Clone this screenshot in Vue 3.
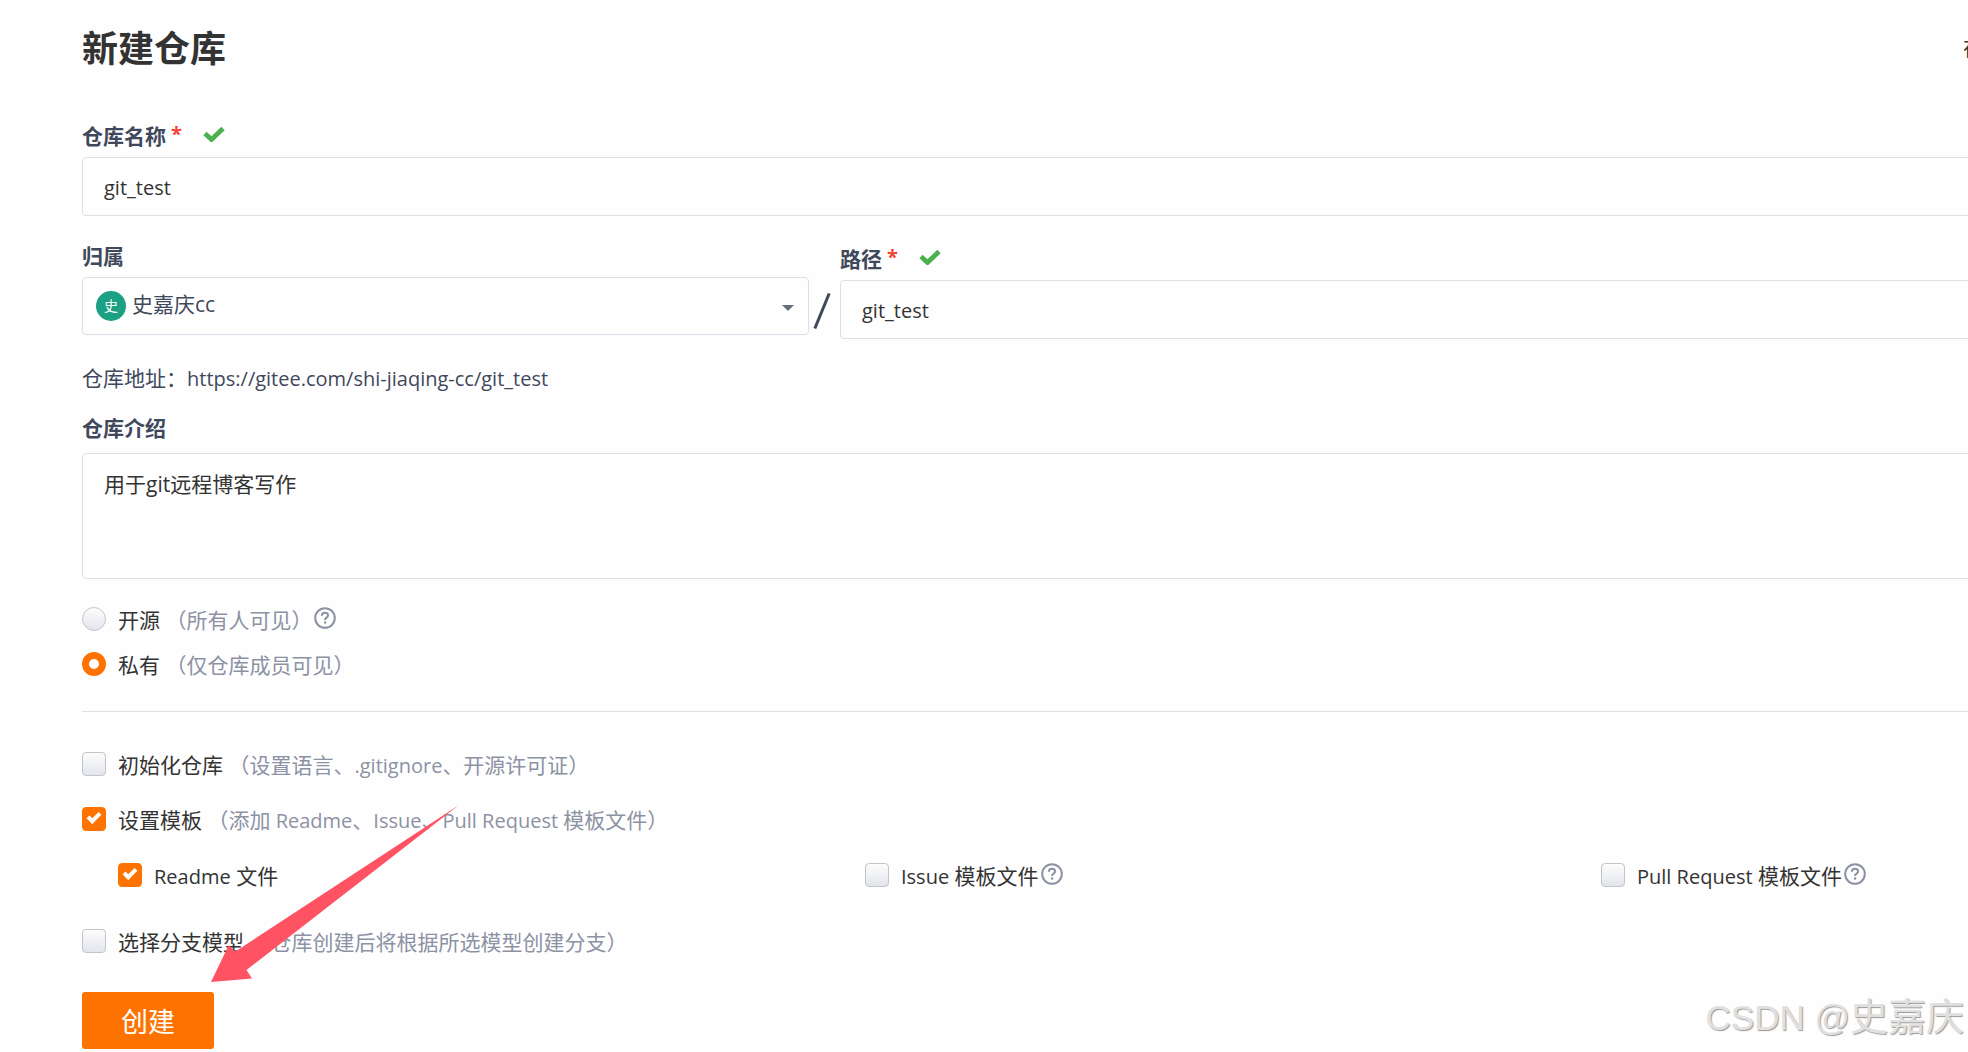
<template>
  <div class="page">
    <form class="repo-form" @submit.prevent>
      <header class="form-header">
        <h1 class="form-title">新建仓库</h1>
        <span class="import-tip">在</span>
      </header>

      <div class="field name-field">
        <div class="field-label">
          <label for="repo-name">仓库名称</label>
          <span class="required">*</span>
          <svg class="tick" viewBox="0 0 22 16" width="22" height="16">
            <path d="M2 7.5 8.5 13.5 20 2.5" fill="none" stroke="#4caf50" stroke-width="4.8" />
          </svg>
        </div>
        <input id="repo-name" v-model="form.name" class="text-input" type="text" />
      </div>

      <div class="path-row">
        <div class="field">
          <div class="field-label">
            <label for="repo-owner">归属</label>
          </div>
          <div class="select-box">
            <span class="avatar">史</span>
            <select id="repo-owner" v-model="form.owner" class="owner-select">
              <option value="shi-jiaqing-cc">史嘉庆cc</option>
            </select>
            <svg class="caret" viewBox="0 0 12 6" width="12" height="6">
              <path d="M0 0H12L6 6Z" fill="#666d7c" />
            </svg>
          </div>
        </div>
        <svg class="slash" viewBox="0 0 18 36" width="18" height="36">
          <path d="M1.8 35.5 16.2 0.5" fill="none" stroke="#40485b" stroke-width="3" />
        </svg>
        <div class="field path-field">
          <div class="field-label">
            <label for="repo-path">路径</label>
            <span class="required">*</span>
            <svg class="tick" viewBox="0 0 22 16" width="22" height="16">
              <path d="M2 7.5 8.5 13.5 20 2.5" fill="none" stroke="#4caf50" stroke-width="4.8" />
            </svg>
          </div>
          <input id="repo-path" v-model="form.path" class="text-input" type="text" />
        </div>
      </div>

      <p class="repo-url">仓库地址：<span class="latin">https://gitee.com/{{ form.owner }}/{{ form.path }}</span></p>

      <div class="field desc-field">
        <div class="field-label">
          <label for="repo-desc">仓库介绍</label>
        </div>
        <textarea id="repo-desc" v-model="form.desc" class="text-area"></textarea>
      </div>

      <div class="visibility">
        <div v-for="item in visibilities" :key="item.value" class="option">
          <input :id="item.value" v-model="form.visibility" type="radio" name="visibility" :value="item.value" class="radio" />
          <label :for="item.value">{{ item.label }} <span class="hint">{{ item.hint }}</span></label>
          <svg v-if="item.help" class="help" viewBox="0 0 22 22" width="22" height="22">
            <circle cx="11" cy="11" r="9.8" />
            <path d="M7.9 8.7C7.9 6.8 9.2 5.8 11 5.8S14.1 6.8 14.1 8.5C14.1 10.6 11 10.7 11 13" />
            <rect x="9.9" y="14.3" width="2.4" height="2.4" rx="1" />
          </svg>
        </div>
      </div>

      <hr class="divider" />

      <div class="option">
        <input id="init" v-model="form.init" type="checkbox" class="checkbox" />
        <label for="init">初始化仓库 <span class="hint">（设置语言、<span class="latin">.gitignore</span>、开源许可证）</span></label>
      </div>

      <div class="option template-option">
        <input id="template" v-model="form.template" type="checkbox" class="checkbox" />
        <label for="template">设置模板 <span class="hint">（添加<span class="latin"> Readme</span>、<span class="latin">Issue</span>、<span class="latin">Pull Request </span>模板文件）</span></label>
      </div>

      <div class="template-files">
        <div v-for="file in files" :key="file.id" class="option">
          <input :id="file.id" v-model="file.checked" type="checkbox" class="checkbox" />
          <label :for="file.id"><span class="latin">{{ file.name }}</span> {{ file.suffix }}</label>
          <svg v-if="file.help" class="help" viewBox="0 0 22 22" width="22" height="22">
            <circle cx="11" cy="11" r="9.8" />
            <path d="M7.9 8.7C7.9 6.8 9.2 5.8 11 5.8S14.1 6.8 14.1 8.5C14.1 10.6 11 10.7 11 13" />
            <rect x="9.9" y="14.3" width="2.4" height="2.4" rx="1" />
          </svg>
        </div>
      </div>

      <div class="option">
        <input id="branch" v-model="form.branch" type="checkbox" class="checkbox" />
        <label for="branch">选择分支模型 <span class="hint">（仓库创建后将根据所选模型创建分支）</span></label>
      </div>

      <button type="submit" class="submit-btn">创建</button>
    </form>

    <svg class="arrow" viewBox="0 0 248 177" width="248" height="177">
      <path d="M0 177 17.5 140.5 24.5 146.5 248 0 35.5 165 41 173.5Z" fill="#ff5263" />
    </svg>
    <div class="watermark"><span class="watermark-site">CSDN @</span>史嘉庆</div>
  </div>
</template>

<script setup>
import { reactive, ref } from 'vue'

const form = reactive({
  name: 'git_test',
  owner: 'shi-jiaqing-cc',
  path: 'git_test',
  desc: '用于git远程博客写作',
  visibility: 'private',
  init: false,
  template: true,
  branch: false,
})

const visibilities = [
  { value: 'public', label: '开源', hint: '（所有人可见）', help: true },
  { value: 'private', label: '私有', hint: '（仅仓库成员可见）', help: false },
]

const files = ref([
  { id: 'readme', name: 'Readme', suffix: '文件', checked: true, help: false },
  { id: 'issue', name: 'Issue', suffix: '模板文件', checked: false, help: true },
  { id: 'pull-request', name: 'Pull Request', suffix: '模板文件', checked: false, help: true },
])
</script>

<style>
body {
  margin: 0;
  background: #fefefe;
}
</style>

<style scoped>
.page {
  position: relative;
  min-height: 100vh;
  overflow: hidden;
  box-sizing: border-box;
  padding: 25px 0 0 82px;
  font-family: "Open Sans", "Noto Sans CJK SC", sans-serif;
  font-size: 21px;
  line-height: 28px;
  color: #333;
}

/* the form is wider than the window and runs off its right side */
.repo-form {
  margin-right: -369px;
}

.form-header {
  display: flex;
  align-items: flex-start;
  justify-content: space-between;
  margin-bottom: 49px;
}

.form-title {
  margin: 0;
  font-size: 36px;
  line-height: 48px;
  font-weight: 700;
}

.import-tip {
  flex: 0 0 374px;
  padding-top: 8px;
}

.field {
  display: flex;
  flex-direction: column;
  gap: 7px;
}

.field-label {
  display: flex;
  align-items: flex-start;
  height: 28px;
  font-weight: 700;
  color: #40485b;
}

.required {
  margin-left: 5px;
  font-size: 20px;
  line-height: 24px;
  color: #f44336;
}

.tick {
  margin: 4px 0 0 21px;
}

.text-input,
.text-area,
.owner-select {
  display: block;
  width: 100%;
  box-sizing: border-box;
  border: 1px solid #dddfe6;
  border-radius: 4px;
  background: transparent;
  font: inherit;
  color: #333;
  outline: none;
}

.text-input {
  height: 59px;
  padding: 2px 21px 0;
  font-size: 20px;
}

.path-row {
  display: grid;
  grid-template-columns: 727fr 31px 1497fr;
  margin-top: 26px;
}

.select-box {
  position: relative;
}

.owner-select {
  height: 58px;
  padding: 0 40px 5px 49px;
  appearance: none;
  border-color: #d9dfe8;
  color: #40485b;
}

.avatar {
  position: absolute;
  left: 14px;
  top: 14px;
  width: 30px;
  height: 30px;
  border-radius: 50%;
  background: #1ba083;
  color: #fff;
  font-size: 14px;
  line-height: 30px;
  text-align: center;
  pointer-events: none;
}

.caret {
  position: absolute;
  right: 15px;
  top: 28px;
  pointer-events: none;
}

.slash {
  align-self: end;
  margin: 0 0 10px 4px;
}

.path-field {
  padding-top: 3px;
}

.repo-url {
  margin: 25px 0 21px;
  color: #40485b;
}

.latin {
  font-size: 20px;
}

.desc-field {
  gap: 11px;
}

.text-area {
  height: 126px;
  padding: 16px 21px;
  resize: none;
}

.visibility {
  display: flex;
  flex-direction: column;
  gap: 17px;
  margin-top: 26px;
}

.option {
  display: flex;
  align-items: center;
  height: 28px;
}

.option label {
  padding-top: 2px;
}

.radio,
.checkbox {
  flex: none;
  width: 24px;
  height: 24px;
  margin: 0 12px 0 0;
  box-sizing: border-box;
  appearance: none;
  border: 1px solid #c3c4c8;
  background: linear-gradient(#fdfdfd, #e2e5ec);
}

.radio {
  border-radius: 50%;
}

.checkbox {
  border-radius: 4px;
}

.radio:checked {
  border: 7px solid #fe7300;
  background: #fff;
}

.checkbox:checked {
  border-color: #fe7300;
  background: #fe7300;
}

.checkbox:checked::after {
  content: "";
  display: block;
  width: 4px;
  height: 9px;
  margin: 2px 0 0 7px;
  border: solid #fff;
  border-width: 0 4px 4px 0;
  transform: rotate(45deg);
}

.hint {
  color: #8c92a4;
}

.help {
  margin: 0 0 2px 2px;
  fill: none;
  stroke: #8c92a4;
  stroke-width: 2;
}

.help rect {
  fill: #8c92a4;
  stroke: none;
}

.divider {
  height: 1px;
  margin: 33px 0 38px;
  border: none;
  background: #dce0e6;
}

.template-option {
  margin-top: 27px;
}

.template-files {
  display: grid;
  grid-template-columns: 747fr 736fr 736fr;
  margin: 28px 0 38px;
  padding-left: 36px;
}

.submit-btn {
  display: block;
  height: 57px;
  margin-top: 37px;
  padding: 0 39px;
  border: none;
  border-radius: 3px;
  background: #fe7300;
  color: #fff;
  font-family: inherit;
  font-size: 27px;
  cursor: pointer;
}

.arrow {
  position: absolute;
  left: 211px;
  top: 805px;
  pointer-events: none;
}

.watermark {
  position: absolute;
  right: 4px;
  bottom: 6px;
  font-family: "Liberation Sans", "Noto Sans CJK SC", sans-serif;
  font-size: 38px;
  line-height: 56px;
  color: #e0e0e0;
  text-shadow: 1px 1px 1px #999;
  pointer-events: none;
}

.watermark-site {
  font-size: 35px;
}
</style>
